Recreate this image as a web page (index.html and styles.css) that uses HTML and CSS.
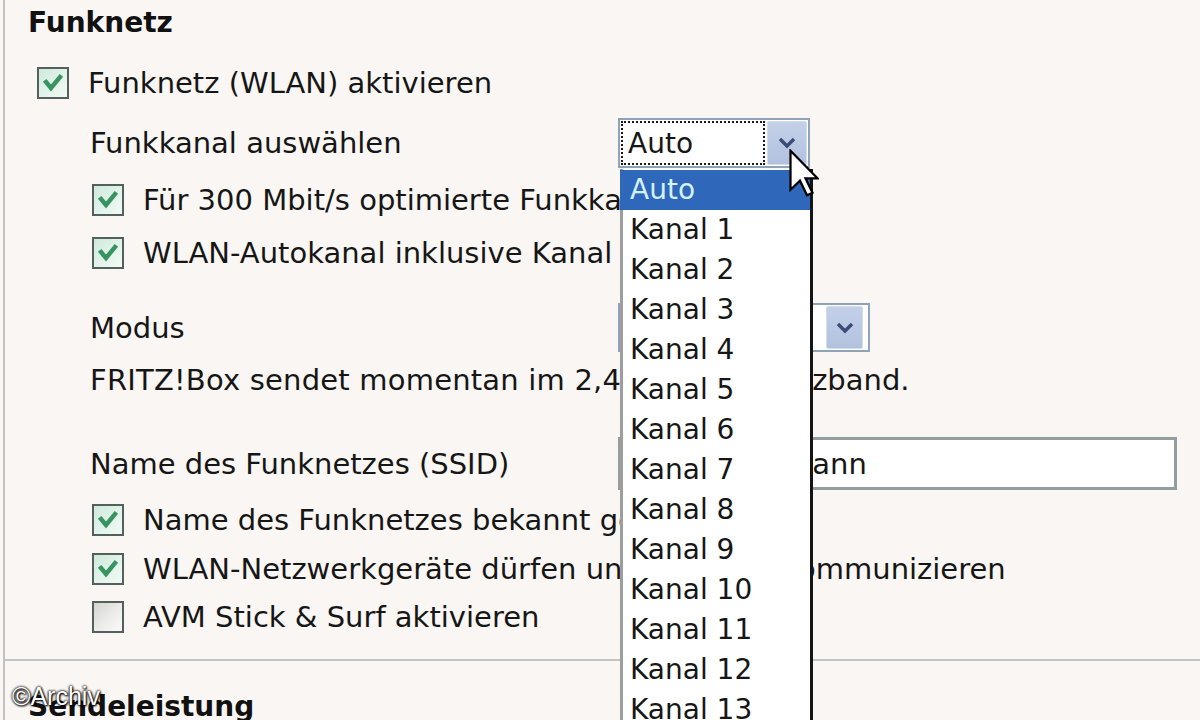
FILE: index.html
```html
<!DOCTYPE html>
<html lang="de">
<head>
<meta charset="utf-8">
<title>Funknetz</title>
<link rel="stylesheet" href="styles.css">
</head>
<body>
<div class="page">
  <section class="group">
    <h2 class="title">Funknetz</h2>
    <div class="row r1">
      <span class="cb on"><svg viewBox="0 0 28 28"><polyline points="7,13 12,19 21,8"/></svg></span>
      <span>Funknetz (WLAN) aktivieren</span>
    </div>
    <div class="sub">
      <div class="row r-kanal">
        <span class="label">Funkkanal auswählen</span>
        <div class="select sel-kanal">
          <span class="sel-value focus">Auto</span>
          <span class="sel-btn"><svg viewBox="0 0 20 12"><polyline points="3,2 10,9 17,2"/></svg></span>
        </div>
      </div>
      <div class="row r-cb2">
        <span class="cb on"><svg viewBox="0 0 28 28"><polyline points="7,13 12,19 21,8"/></svg></span>
        <span>Für 300 Mbit/s optimierte Funkkanäle</span>
      </div>
      <div class="row r-cb3">
        <span class="cb on"><svg viewBox="0 0 28 28"><polyline points="7,13 12,19 21,8"/></svg></span>
        <span>WLAN-Autokanal inklusive Kanal 12/13</span>
      </div>
      <div class="row r-modus">
        <span class="label">Modus</span>
        <div class="select sel-modus">
          <span class="sel-value clip">802.11n+g+b</span>
          <span class="sel-btn"><svg viewBox="0 0 20 12"><polyline points="3,2 10,9 17,2"/></svg></span>
        </div>
      </div>
      <div class="row r-fritz">
        <span><span class="wide">FRITZ!Box sendet momentan im 2,4</span><span class="tight2">-GHz-Frequen</span>zband.</span>
      </div>
      <div class="row r-ssid">
        <span class="label">Name des Funknetzes (SSID)</span>
        <div class="field">WLAN Hofmann</div>
      </div>
      <div class="row r-cb4">
        <span class="cb on"><svg viewBox="0 0 28 28"><polyline points="7,13 12,19 21,8"/></svg></span>
        <span>Name des Funknetzes bekannt geben</span>
      </div>
      <div class="row r-cb5">
        <span class="cb on"><svg viewBox="0 0 28 28"><polyline points="7,13 12,19 21,8"/></svg></span>
        <span>WLAN-Netzwerkgeräte dürfen un<span class="tight">tereinander k</span>ommunizieren</span>
      </div>
      <div class="row r-cb6">
        <span class="cb off"></span>
        <span>AVM Stick &amp; Surf aktivieren</span>
      </div>
    </div>
  </section>
  <hr class="divider">
  <section class="group">
    <h2 class="title title2">Sendeleistung</h2>
  </section>
</div>

<ul class="dropdown">
  <li class="opt sel">Auto</li>
  <li class="opt">Kanal 1</li>
  <li class="opt">Kanal 2</li>
  <li class="opt">Kanal 3</li>
  <li class="opt">Kanal 4</li>
  <li class="opt">Kanal 5</li>
  <li class="opt">Kanal 6</li>
  <li class="opt">Kanal 7</li>
  <li class="opt">Kanal 8</li>
  <li class="opt">Kanal 9</li>
  <li class="opt">Kanal 10</li>
  <li class="opt">Kanal 11</li>
  <li class="opt">Kanal 12</li>
  <li class="opt">Kanal 13</li>
</ul>

<svg class="cursor" viewBox="0 0 12 19"><path d="M0.6 0.6 L0.6 16.2 L4.4 12.6 L7.2 18.4 L9.4 17.4 L6.6 11.6 L11.4 11.6 Z"/></svg>

<div class="watermark">©Archiv</div>
</body>
</html>
```

FILE: styles.css
```css
html, body {
  margin: 0;
  padding: 0;
}

body {
  background: #faf6f3;
  font-family: "DejaVu Sans", Verdana, sans-serif;
  font-size: 29px;
  color: #161616;
  height: 720px;
  overflow: hidden;
  position: relative;
}

.page {
  margin-left: 3px;
  border-left: 2px solid #c2c2c2;
  min-height: 720px;
}

.group {
  padding-left: 23px;
}

.title {
  margin: 0;
  font-size: 28px;
  font-weight: bold;
  height: 46px;
  line-height: 46px;
  color: #111;
}

.title2 {
  margin-top: 23px;
}

.row {
  display: flex;
  align-items: center;
  height: 50px;
  white-space: nowrap;
}

.r1 {
  margin-top: 12px;
  margin-left: 9px;
}

.sub {
  margin-left: 62px;
}

.sub .cb {
  margin-left: 2px;
}

.r-kanal { margin-top: 10px; }
.r-cb2 { margin-top: 7px; }
.r-cb3 { margin-top: 3px; }
.r-modus { margin-top: 25px; height: 49px; }
.r-fritz { margin-top: 6px; height: 44px; }
.r-ssid { margin-top: 35px; height: 53px; }
.r-cb4 { margin-top: 6px; height: 48px; }
.r-cb5 { margin-top: 1px; height: 48px; }
.r-cb6 { margin-top: 0; height: 48px; }

.wide {
  letter-spacing: 0.2px;
}

.tight2 {
  letter-spacing: -0.6px;
}

.tight {
  letter-spacing: -1.5px;
}

.label {
  flex: none;
  width: 528px;
}

/* checkbox */
.cb {
  flex: none;
  box-sizing: border-box;
  width: 32px;
  height: 32px;
  border: 2px solid #54605d;
  margin-right: 19px;
  display: flex;
  align-items: center;
  justify-content: center;
}

.cb.on {
  background: linear-gradient(135deg, #cfe9dc 0%, #e4f4ec 60%, #f2faf6 100%);
}

.cb.off {
  background: linear-gradient(135deg, #d4d4d1 0%, #ececea 55%, #fbfbfb 100%);
}

.cb svg {
  width: 28px;
  height: 28px;
}

.cb polyline {
  fill: none;
  stroke: #37945f;
  stroke-width: 4.4;
  stroke-linecap: square;
  stroke-linejoin: miter;
}

/* select boxes */
.select {
  flex: none;
  box-sizing: border-box;
  display: flex;
  border: 2px solid #8ea2b8;
  background: #fff;
  padding: 1px;
}

.sel-kanal {
  width: 192px;
  height: 50px;
}

.sel-modus {
  width: 252px;
  height: 49px;
}

.sel-value {
  flex: 1;
  display: flex;
  align-items: center;
  padding-left: 7px;
  font-size: 28px;
  min-width: 0;
}

.sel-value.focus {
  border: 2px dotted #1a1a1a;
  padding-left: 5px;
  margin-right: 2px;
}

.sel-value.clip {
  overflow: hidden;
  max-width: 180px;
  margin-right: 18px;
}

.sel-btn {
  flex: none;
  width: 40px;
  box-sizing: border-box;
  border: 1px solid #d4ddec;
  border-radius: 2px;
  background: linear-gradient(180deg, #c3d0e8 0%, #b2c2de 100%);
  display: flex;
  align-items: center;
  justify-content: center;
}

.sel-modus .sel-btn {
  width: 37px;
}

.sel-btn svg {
  width: 20px;
  height: 12px;
}

.sel-btn polyline {
  fill: none;
  stroke: #3a4b77;
  stroke-width: 3.4;
}

/* text field */
.field {
  flex: none;
  box-sizing: border-box;
  width: 559px;
  height: 53px;
  border: 3px solid #939e9e;
  background: #fff;
  display: flex;
  align-items: center;
  padding-left: 17px;
  overflow: hidden;
}

.divider {
  border: 0;
  height: 2px;
  background: #c3c3c3;
  margin: 18px 0 0;
}

/* open dropdown list */
.dropdown {
  position: absolute;
  left: 620px;
  top: 169px;
  width: 193px;
  height: 560px;
  box-sizing: border-box;
  margin: 0;
  padding: 1px 0 0;
  list-style: none;
  background: #fff;
  border-left: 3px solid #9d9d9d;
  border-right: 3px solid #151515;
  font-size: 28px;
}

.opt {
  height: 40px;
  line-height: 40px;
  padding-left: 7px;
  white-space: nowrap;
}

.opt.sel {
  background: #2f67bb;
  color: #d3f1ff;
  margin-left: -3px;
  padding-left: 10px;
}

.cursor {
  position: absolute;
  left: 789px;
  top: 149px;
  width: 30px;
  height: 48px;
}

.cursor path {
  fill: #fff;
  stroke: #000;
  stroke-width: 0.9;
  stroke-linejoin: miter;
}

.watermark {
  position: absolute;
  left: 12px;
  top: 684px;
  font-family: "Liberation Sans", Arial, sans-serif;
  font-size: 25px;
  line-height: 25px;
  color: #fff;
  text-shadow: 0 0 2px #000, 0 0 3px #000, 1px 1px 2px #000;
}
```
